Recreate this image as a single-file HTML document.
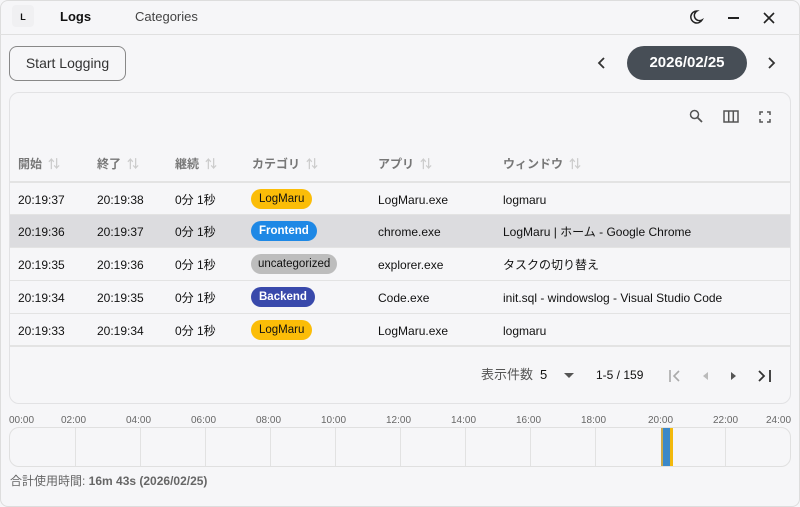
<!DOCTYPE html>
<html><head><meta charset="utf-8"><style>
*{box-sizing:border-box;margin:0;padding:0}
body{width:800px;height:507px;overflow:hidden;background:#f6f6f8;font-family:"Liberation Sans","Noto Sans CJK JP",sans-serif;color:#111;position:relative;font-size:12px;line-height:14px}
.abs{position:absolute}
.frame{position:absolute;inset:0;border:1px solid #ddd;border-radius:8px}
.card{left:9px;top:92px;width:782px;height:312px;border:1px solid #e2e2e4;border-radius:10px}
.hdr{color:#777;font-weight:bold;font-size:12px;top:157px}
.hdr i{font-style:normal;color:#ccc;margin-left:6px}
.row{left:10px;width:780px;height:33px;border-top:1px solid #e3e3e3}
.row span{position:absolute;top:10px;font-size:12px;line-height:14px}
.row span.tag{border-radius:10px;padding:0 8px;font-size:11.5px;height:20px;top:6px;display:block;line-height:21px;font-family:"Liberation Sans",sans-serif}
.tl{font-size:10px;color:#666;top:414px}
.vl{position:absolute;top:0;bottom:0;width:1px;background:#e2e2e2}
</style></head><body>
<div class="frame"></div>
<div class="abs" style="left:12px;top:5px;width:22px;height:22px;background:#f0f0f2;border-radius:4px;font-size:9px;font-weight:bold;text-align:center;line-height:24px">L</div>
<div class="abs" style="left:60px;top:9px;font-size:13px;font-weight:bold;line-height:16px">Logs</div>
<div class="abs" style="left:135px;top:9px;font-size:13px;color:#444;line-height:16px">Categories</div>
<svg class="abs" style="left:688px;top:9px" width="16" height="16" viewBox="0 0 16 16"><path d="M9 2a6 6 0 1 0 5 9A5 5 0 0 1 9 2z" fill="none" stroke="#222" stroke-width="1.5"/></svg>
<div class="abs" style="left:728px;top:17px;width:11px;height:2px;background:#222"></div>
<svg class="abs" style="left:763px;top:12px" width="12" height="12"><path d="M1 1L11 11M11 1L1 11" stroke="#222" stroke-width="1.6"/></svg>
<div class="abs" style="left:0;top:34px;width:800px;height:1px;background:#e0e0e0"></div>
<div class="abs" style="left:9px;top:46px;width:117px;height:35px;border:1px solid #888;border-radius:8px;font-size:14px;color:#333;text-align:center;line-height:33px">Start Logging</div>
<svg class="abs" style="left:597px;top:56px" width="10" height="14"><path d="M7 2L2 7L7 12" fill="none" stroke="#333" stroke-width="1.8"/></svg>
<div class="abs" style="left:627px;top:46px;width:120px;height:34px;background:#474e56;border-radius:17px;color:#fff;font-weight:bold;font-size:15px;text-align:center;line-height:34px">2026/02/25</div>
<svg class="abs" style="left:766px;top:56px" width="10" height="14"><path d="M3 2L8 7L3 12" fill="none" stroke="#333" stroke-width="1.8"/></svg>
<div class="abs card"></div>
<svg class="abs" style="left:689px;top:109px" width="14" height="14"><circle cx="5.5" cy="5.5" r="4" fill="none" stroke="#555" stroke-width="1.5"/><path d="M8.5 8.5L13 13" stroke="#555" stroke-width="1.8"/></svg>
<svg class="abs" style="left:723px;top:110px" width="16" height="13"><rect x="1" y="1" width="14" height="11" fill="none" stroke="#555" stroke-width="1.5"/><path d="M5.7 1v11M10.3 1v11" stroke="#555" stroke-width="1.5"/></svg>
<svg class="abs" style="left:759px;top:111px" width="12" height="12"><path d="M1 4V1h3M8 1h3v3M11 8v3H8M4 11H1V8" fill="none" stroke="#555" stroke-width="1.5"/></svg>
<div class="abs hdr" style="left:18px">開始<i>⇅</i></div>
<div class="abs hdr" style="left:97px">終了<i>⇅</i></div>
<div class="abs hdr" style="left:175px">継続<i>⇅</i></div>
<div class="abs hdr" style="left:252px">カテゴリ<i>⇅</i></div>
<div class="abs hdr" style="left:378px">アプリ<i>⇅</i></div>
<div class="abs hdr" style="left:503px">ウィンドウ<i>⇅</i></div>
<div class="abs row" style="top:181px;border-top:2px solid #e3e3e3"><span style="left:8px">20:19:37</span><span style="left:87px">20:19:38</span><span style="left:165px">0分 1秒</span><span class="tag" style="left:241px;background:#fbbd08">LogMaru</span><span style="left:368px">LogMaru.exe</span><span style="left:493px">logmaru</span></div>
<div class="abs row" style="top:214px;background:#dcdcdf"><span style="left:8px">20:19:36</span><span style="left:87px">20:19:37</span><span style="left:165px">0分 1秒</span><span class="tag" style="left:241px;background:#1e88e5;color:#fff;font-weight:bold">Frontend</span><span style="left:368px">chrome.exe</span><span style="left:493px">LogMaru | ホーム - Google Chrome</span></div>
<div class="abs row" style="top:247px"><span style="left:8px">20:19:35</span><span style="left:87px">20:19:36</span><span style="left:165px">0分 1秒</span><span class="tag" style="left:241px;background:#bdbdbd;padding:0 7px">uncategorized</span><span style="left:368px">explorer.exe</span><span style="left:493px">タスクの切り替え</span></div>
<div class="abs row" style="top:280px"><span style="left:8px">20:19:34</span><span style="left:87px">20:19:35</span><span style="left:165px">0分 1秒</span><span class="tag" style="left:241px;background:#3949ab;color:#fff;font-weight:bold">Backend</span><span style="left:368px">Code.exe</span><span style="left:493px">init.sql - windowslog - Visual Studio Code</span></div>
<div class="abs row" style="top:313px;height:34px;border-bottom:2px solid #e3e3e3"><span style="left:8px">20:19:33</span><span style="left:87px">20:19:34</span><span style="left:165px">0分 1秒</span><span class="tag" style="left:241px;background:#fbbd08">LogMaru</span><span style="left:368px">LogMaru.exe</span><span style="left:493px">logmaru</span></div>
<div class="abs" style="left:481px;top:367px;font-size:13px;color:#555;line-height:16px">表示件数</div>
<div class="abs" style="left:540px;top:367px;font-size:13px;line-height:16px">5</div>
<svg class="abs" style="left:564px;top:373px" width="10" height="6"><path d="M0 0H10L5 5z" fill="#555"/></svg>
<div class="abs" style="left:596px;top:368px;font-size:12px">1-5 / 159</div>
<svg class="abs" style="left:668px;top:369px" width="14" height="14"><path d="M2 1v12M11 2L6 7l5 5" fill="none" stroke="#aaa" stroke-width="1.6"/></svg>
<svg class="abs" style="left:703px;top:372px" width="6" height="8"><path d="M5 0v8L0 4z" fill="#bbb"/></svg>
<svg class="abs" style="left:731px;top:372px" width="6" height="8"><path d="M0 0v8L5 4z" fill="#555"/></svg>
<svg class="abs" style="left:757px;top:369px" width="16" height="14"><path d="M2 2l5 5-5 5M13 1v12" fill="none" stroke="#333" stroke-width="1.8"/></svg>
<div class="abs tl" style="left:9px">00:00</div><div class="abs tl" style="left:61px">02:00</div><div class="abs tl" style="left:126px">04:00</div><div class="abs tl" style="left:191px">06:00</div><div class="abs tl" style="left:256px">08:00</div><div class="abs tl" style="left:321px">10:00</div><div class="abs tl" style="left:386px">12:00</div><div class="abs tl" style="left:451px">14:00</div><div class="abs tl" style="left:516px">16:00</div><div class="abs tl" style="left:581px">18:00</div><div class="abs tl" style="left:648px">20:00</div><div class="abs tl" style="left:713px">22:00</div><div class="abs tl" style="left:766px">24:00</div>
<div class="abs" style="left:9px;top:427px;width:782px;height:40px;border:1px solid #e0e0e0;border-radius:10px;overflow:hidden">
<div class="vl" style="left:65px"></div><div class="vl" style="left:130px"></div><div class="vl" style="left:195px"></div><div class="vl" style="left:260px"></div><div class="vl" style="left:325px"></div><div class="vl" style="left:390px"></div><div class="vl" style="left:455px"></div><div class="vl" style="left:520px"></div><div class="vl" style="left:585px"></div><div class="vl" style="left:715px"></div>
<div class="abs" style="left:651px;top:0;width:2px;height:40px;background:#c9a84a"></div>
<div class="abs" style="left:653px;top:0;width:7px;height:40px;background:#3b88c8"></div>
<div class="abs" style="left:660px;top:0;width:3px;height:40px;background:#f2b90d"></div>
</div>
<div class="abs" style="left:10px;top:474px;font-size:12px;color:#666">合計使用時間: <b>16m 43s (2026/02/25)</b></div>
</body></html>
